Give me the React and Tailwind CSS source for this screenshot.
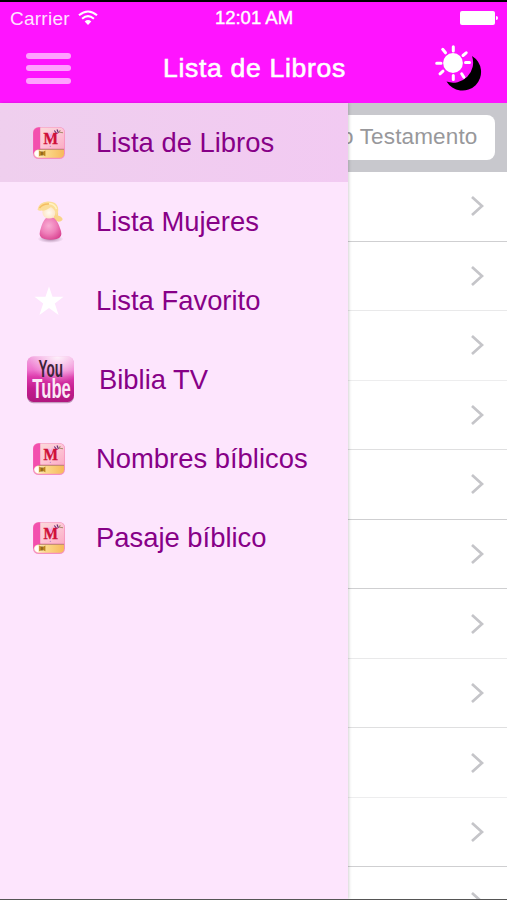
import { useState } from 'react';

const BookIcon = () => (
  <svg width="34" height="34" viewBox="0 0 34 34">
    <defs>
      <linearGradient id="cover" x1="0" y1="0" x2="1" y2="1">
        <stop offset="0" stopColor="#fbd9da" />
        <stop offset="0.5" stopColor="#fdc6d6" />
        <stop offset="1" stopColor="#fbacc4" />
      </linearGradient>
      <linearGradient id="pages" x1="0" y1="0" x2="1" y2="0">
        <stop offset="0" stopColor="#fff6d8" />
        <stop offset="0.4" stopColor="#fbd98a" />
        <stop offset="1" stopColor="#f7b95c" />
      </linearGradient>
    </defs>
    <rect x="1" y="1" width="32" height="32" rx="5.5" fill="#f58fc0" />
    <path d="M6.5 1.5 H8.5 V24 Q3 24 1.2 28 V7 Q1.5 2 6.5 1.5Z" fill="#f34fae" />
    <path d="M8.3 1.6 H27.5 Q32.3 2 32.3 6.5 V22.5 H8.3Z" fill="url(#cover)" />
    <path d="M6.5 23.4 H32 V28.5 Q31.5 31.6 28 31.8 H6.5 Q2.2 31 2.2 27.6 Q2.2 24 6.5 23.4Z" fill="url(#pages)" />
    <path d="M6.5 23.4 H32" stroke="#b9896a" strokeWidth="0.9" fill="none" />
    <path d="M6.3 24.2 Q2.9 25 2.9 27.7 Q3 30.4 6.3 31.2Z" fill="#fff" />
    <path d="M7.2 24.6 L10.2 26.3 L13.4 24.6 V30.2 L10.4 28.8 L7.2 30.2Z" fill="#b98320" />
    <path d="M10 25.2 V29.8" stroke="#5e3c14" strokeWidth="0.8" />
    <text x="11.5" y="18" fontSize="16.5" fontWeight="bold" textLength="14.5" lengthAdjust="spacingAndGlyphs" fill="#cf1038" stroke="#cf1038" strokeWidth="0.4" className="font-['Liberation_Serif',serif]">M</text>
    <path d="M16.5 5.5 L18.5 8.5 L20.8 5 L20 11 L18.6 13Z" fill="#f0a8e4" />
    <path d="M22.3 4.5 L24.3 7 M25 3.5 L26.5 7" stroke="#663075" strokeWidth="1.2" />
    <path d="M28.3 4.2 L27.2 6.2 L31 6.8" stroke="#a58a6a" strokeWidth="1.1" fill="none" />
    <circle cx="18.4" cy="20.4" r="0.7" fill="#c78cc9" />
  </svg>
);

const PrincessIcon = () => (
  <svg width="34" height="44" viewBox="0 0 34 44">
    <defs>
      <radialGradient id="dress" cx="0.42" cy="0.38" r="0.7">
        <stop offset="0" stopColor="#f8add3" />
        <stop offset="0.5" stopColor="#ef80ba" />
        <stop offset="1" stopColor="#d9418f" />
      </radialGradient>
      <radialGradient id="face" cx="0.5" cy="0.55" r="0.55">
        <stop offset="0" stopColor="#fffaf2" />
        <stop offset="1" stopColor="#fce3c0" />
      </radialGradient>
      <radialGradient id="ground">
        <stop offset="0" stopColor="#8d668a" stopOpacity="0.75" />
        <stop offset="1" stopColor="#8d668a" stopOpacity="0" />
      </radialGradient>
    </defs>
    <ellipse cx="18.5" cy="39" rx="13" ry="4" fill="url(#ground)" />
    <path d="M22 6 Q27 10 26 15.5 Q31 17 30.5 20 Q27 23.5 21.5 19.5Z" fill="#f9d488" />
    <path d="M14 18 Q18 16.5 22 18 Q26 21 29 31 Q30.8 37.8 24.5 39 Q18.5 40.5 12.5 39 Q6.2 37.8 8 31 Q10.5 21 14 18Z" fill="url(#dress)" />
    <circle cx="17" cy="12" r="6.6" fill="url(#face)" />
    <path d="M5.5 9.5 Q7 2 15.5 1.5 Q24.5 1 26 7.5 Q27 13 24 15.5 Q24 10 19 7 Q14 11 9.5 10.6 Q6.5 11 5.5 9.5Z" fill="#fbdd98" />
    <path d="M7.5 8 Q11 3.5 17 4" stroke="#f5be62" strokeWidth="1.5" fill="none" />
    <path d="M17 3.5 Q23 4 24.5 9" stroke="#fff2c3" strokeWidth="1.5" fill="none" />
  </svg>
);

const StarIcon = () => (
  <svg width="30" height="30" viewBox="0 0 30 30">
    <path d="M15 0.5 L18.5 10.8 H29.5 L20.8 17.4 L24.6 29 L15 22 L5.4 29 L9.2 17.4 L0.5 10.8 H11.5Z" fill="#fff" />
  </svg>
);

const YouTubeIcon = () => (
  <svg width="49" height="48" viewBox="0 0 49 48">
    <defs>
      <linearGradient id="tube" x1="0" y1="0" x2="0" y2="1">
        <stop offset="0" stopColor="#f3a6e0" />
        <stop offset="0.3" stopColor="#ee72cd" />
        <stop offset="0.45" stopColor="#dd3cad" />
        <stop offset="0.7" stopColor="#c41c90" />
        <stop offset="1" stopColor="#b0187e" />
      </linearGradient>
      <radialGradient id="shine" cx="0.65" cy="0" r="0.6">
        <stop offset="0" stopColor="#fff" stopOpacity="0.85" />
        <stop offset="1" stopColor="#fff" stopOpacity="0" />
      </radialGradient>
    </defs>
    <rect x="1" y="1.2" width="47" height="46" rx="6.5" fill="#9d6b94" opacity="0.6" />
    <rect x="1" y="0.3" width="47" height="45.7" rx="6.5" fill="url(#tube)" />
    <rect x="1" y="0.3" width="47" height="45.7" rx="6.5" fill="url(#shine)" />
    <text x="12.5" y="20.5" fontSize="23.5" fontWeight="bold" textLength="24.5" lengthAdjust="spacingAndGlyphs" fill="#3d2439" className="font-['Liberation_Sans_Narrow','Liberation_Sans',sans-serif]">You</text>
    <text x="6.3" y="42" fontSize="27.5" fontWeight="bold" textLength="38.5" lengthAdjust="spacingAndGlyphs" fill="#fbe9f7" className="font-['Liberation_Sans_Narrow','Liberation_Sans',sans-serif]">Tube</text>
  </svg>
);

const DayNightIcon = () => (
  <svg width="48" height="48" viewBox="0 0 48 48">
    <path d="M37 12 A18.6 18.6 0 1 1 11.5 37.5 A20 20 0 0 0 37 12Z" fill="#000" />
    <circle cx="18" cy="19" r="9.9" fill="#fff" />
    <path
      d="M18.3 2.7 V7 M18.3 31.5 V35.5 M1.7 19.3 H6 M30.5 18.5 H34.5 M7.7 5.3 L10.5 8.8 M28 11.5 L31.2 8.8 M5 29.8 L8 27.2 M26.7 29.8 L28.9 33.2"
      stroke="#fff"
      strokeWidth="3"
      strokeLinecap="round"
    />
  </svg>
);

const WifiIcon = () => (
  <svg width="20" height="16" viewBox="0 0 20 16">
    <g fill="none" stroke="#fff" strokeWidth="2.1">
      <path d="M1 5.3 Q10 -2.3 19 5.3" />
      <path d="M4.1 8.7 Q10 3.7 15.9 8.7" />
    </g>
    <path d="M6.7 11.4 Q10 8.7 13.3 11.4 L10 15Z" fill="#fff" />
  </svg>
);

const menuItems = [
  { label: 'Lista de Libros', icon: BookIcon },
  { label: 'Lista Mujeres', icon: PrincessIcon },
  { label: 'Lista Favorito', icon: StarIcon },
  { label: 'Biblia TV', icon: YouTubeIcon, wide: true },
  { label: 'Nombres bíblicos', icon: BookIcon },
  { label: 'Pasaje bíblico', icon: BookIcon },
];

const rows = [
  'border-[#cfcfd1]',
  'border-[#e9e9ea]',
  'border-[#ededee]',
  'border-[#dfdfe0]',
  'border-[#cfcfd1]',
  'border-[#cfcfd1]',
  'border-[#e9e9ea]',
  'border-[#dfdfe0]',
  'border-[#ededee]',
  'border-[#cfcfd1]',
  'border-white',
];

const Header = () => (
  <header className="h-[103px] shrink-0 border-t-2 border-black bg-[#ff14ff] text-white">
    <div className="grid h-8 grid-cols-3 items-center pl-[10px] pr-[9px] text-[19px] leading-none">
      <div className="flex items-center gap-2">
        <span className="tracking-[0.25px] text-[#ffe3ff]">Carrier</span>
        <WifiIcon />
      </div>
      <span className="text-center text-[18.5px] [-webkit-text-stroke:0.4px_white]">12:01 AM</span>
      <div className="flex items-center justify-end gap-px">
        <span className="h-[14px] w-[35px] rounded-[2px] bg-white" />
        <span className="h-1 w-[2px] rounded-r-full bg-white" />
      </div>
    </div>
    <div className="grid h-[68px] grid-cols-[1fr_auto_1fr] items-center pl-[26px] pr-[24px]">
      <button className="flex w-[45px] flex-col gap-[6.5px]" aria-label="Menu">
        <span className="h-[6px] rounded-full bg-[#ffa1ff]" />
        <span className="h-[6px] rounded-full bg-[#ffa1ff]" />
        <span className="h-[6px] rounded-full bg-[#ffa1ff]" />
      </button>
      <h1 className="text-[26.5px] leading-none tracking-[0.7px] [-webkit-text-stroke:0.6px_white]">Lista de Libros</h1>
      <button className="justify-self-end" aria-label="Modo nocturno">
        <DayNightIcon />
      </button>
    </div>
  </header>
);

const Drawer = ({ selected, onSelect }) => (
  <nav className="z-10 w-[348px] shrink-0 bg-[#fde5fd] shadow-[1px_0_3px_rgba(0,0,0,0.18)]">
    {menuItems.map(({ label, icon: Icon, wide }, i) => (
      <button
        key={label}
        onClick={() => onSelect(i)}
        className={`flex h-[79px] w-full items-center text-left text-[27.4px] leading-none text-[#870087] ${
          i === selected ? 'bg-linear-to-r from-[#efcfee] to-[#f2caf2]' : ''
        }`}
      >
        <span className={`flex shrink-0 ${wide ? 'w-[99px] pl-[26px]' : 'w-[96px] justify-center pl-[2px]'}`}>
          <Icon />
        </span>
        <span>{label}</span>
      </button>
    ))}
  </nav>
);

const BookList = () => (
  <main className="flex min-w-0 flex-1 flex-col overflow-hidden bg-white">
    <div className="flex h-[69px] shrink-0 items-center bg-[#c8c8cd] pr-[12.5px]">
      <div className="flex h-[45px] min-w-0 flex-1 items-center justify-end overflow-hidden rounded-r-[8px] bg-white pr-[17px]">
        <span className="whitespace-nowrap text-[22.5px] leading-none tracking-[0.15px] text-[#98989b]">Nuevo Testamento</span>
      </div>
    </div>
    {rows.map((border, i) => (
      <div key={i} className={`flex h-[69.55px] shrink-0 items-center justify-end border-b pr-[23px] ${border}`}>
        <svg width="14" height="22" viewBox="0 0 14 22">
          <path d="M2 2 L12 11 L2 20" fill="none" stroke="#c5c5c9" strokeWidth="2.7" />
        </svg>
      </div>
    ))}
  </main>
);

export default function App() {
  const [selected, setSelected] = useState(0);

  return (
    <div className="flex h-[900px] w-[507px] flex-col overflow-hidden border-b border-[#555] bg-white font-['Liberation_Sans',Arial,sans-serif]">
      <Header />
      <div className="flex min-h-0 flex-1">
        <Drawer selected={selected} onSelect={setSelected} />
        <BookList />
      </div>
    </div>
  );
}
